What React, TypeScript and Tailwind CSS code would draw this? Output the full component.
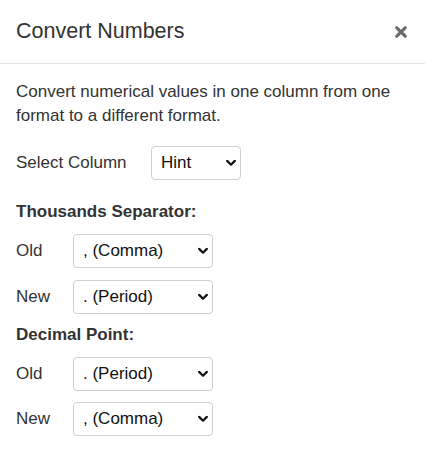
import React from "react";

function Chevron() {
  return (
    <svg width="10" height="7" viewBox="0 0 10 7" className="pointer-events-none absolute right-[5px] top-1/2 -translate-y-1/2">
      <path d="M1.2 1.4 L5 5.2 L8.8 1.4" fill="none" stroke="#111" strokeWidth="2.2" strokeLinecap="round" strokeLinejoin="round" />
    </svg>
  );
}

function Select({ value, width }: { value: string; width: string }) {
  return (
    <div className={`relative h-[34px] ${width}`}>
      <select
        defaultValue={value}
        className="h-full w-full appearance-none rounded-[4px] border border-[#cfcfcf] bg-white pl-[9px] pr-6 font-[family-name:Liberation_Sans,Arial,sans-serif] text-[17px] text-[#111] outline-none"
      >
        <option>{value}</option>
      </select>
      <Chevron />
    </div>
  );
}

function Row({ label, value }: { label: string; value: string }) {
  return (
    <div className="flex items-center">
      <span className="w-[57px] text-[17px] leading-6">{label}</span>
      <Select value={value} width="w-[140px]" />
    </div>
  );
}

export default function App() {
  return (
    <div className="h-[450px] w-[425px] bg-white font-[family-name:Liberation_Sans,Arial,sans-serif] text-[#333]">
      <div className="flex h-[64px] items-center justify-between border-b border-[#e5e5e5] pl-4 pr-[18px]">
        <h4 className="text-[21.5px] leading-none">Convert Numbers</h4>
        <svg width="12" height="12" viewBox="0 0 12 12">
          <path d="M1.8 1.8 L10.2 10.2 M10.2 1.8 L1.8 10.2" stroke="#6b6b6b" strokeWidth="3.2" strokeLinecap="round" />
        </svg>
      </div>
      <div className="px-4 pt-4">
        <p className="text-[17px] leading-6">
          Convert numerical values in one column from one format to a different format.
        </p>
        <div className="mt-[18px] flex items-center">
          <span className="w-[135px] text-[17px] leading-6">Select Column</span>
          <Select value="Hint" width="w-[90px]" />
        </div>
        <div className="mt-[20px] text-[17px] font-bold leading-6">Thousands Separator:</div>
        <div className="mt-[10px]">
          <Row label="Old" value=", (Comma)" />
        </div>
        <div className="mt-[12px]">
          <Row label="New" value=". (Period)" />
        </div>
        <div className="mt-[9px] text-[17px] font-bold leading-6">Decimal Point:</div>
        <div className="mt-[10px]">
          <Row label="Old" value=". (Period)" />
        </div>
        <div className="mt-[11px]">
          <Row label="New" value=", (Comma)" />
        </div>
      </div>
    </div>
  );
}
